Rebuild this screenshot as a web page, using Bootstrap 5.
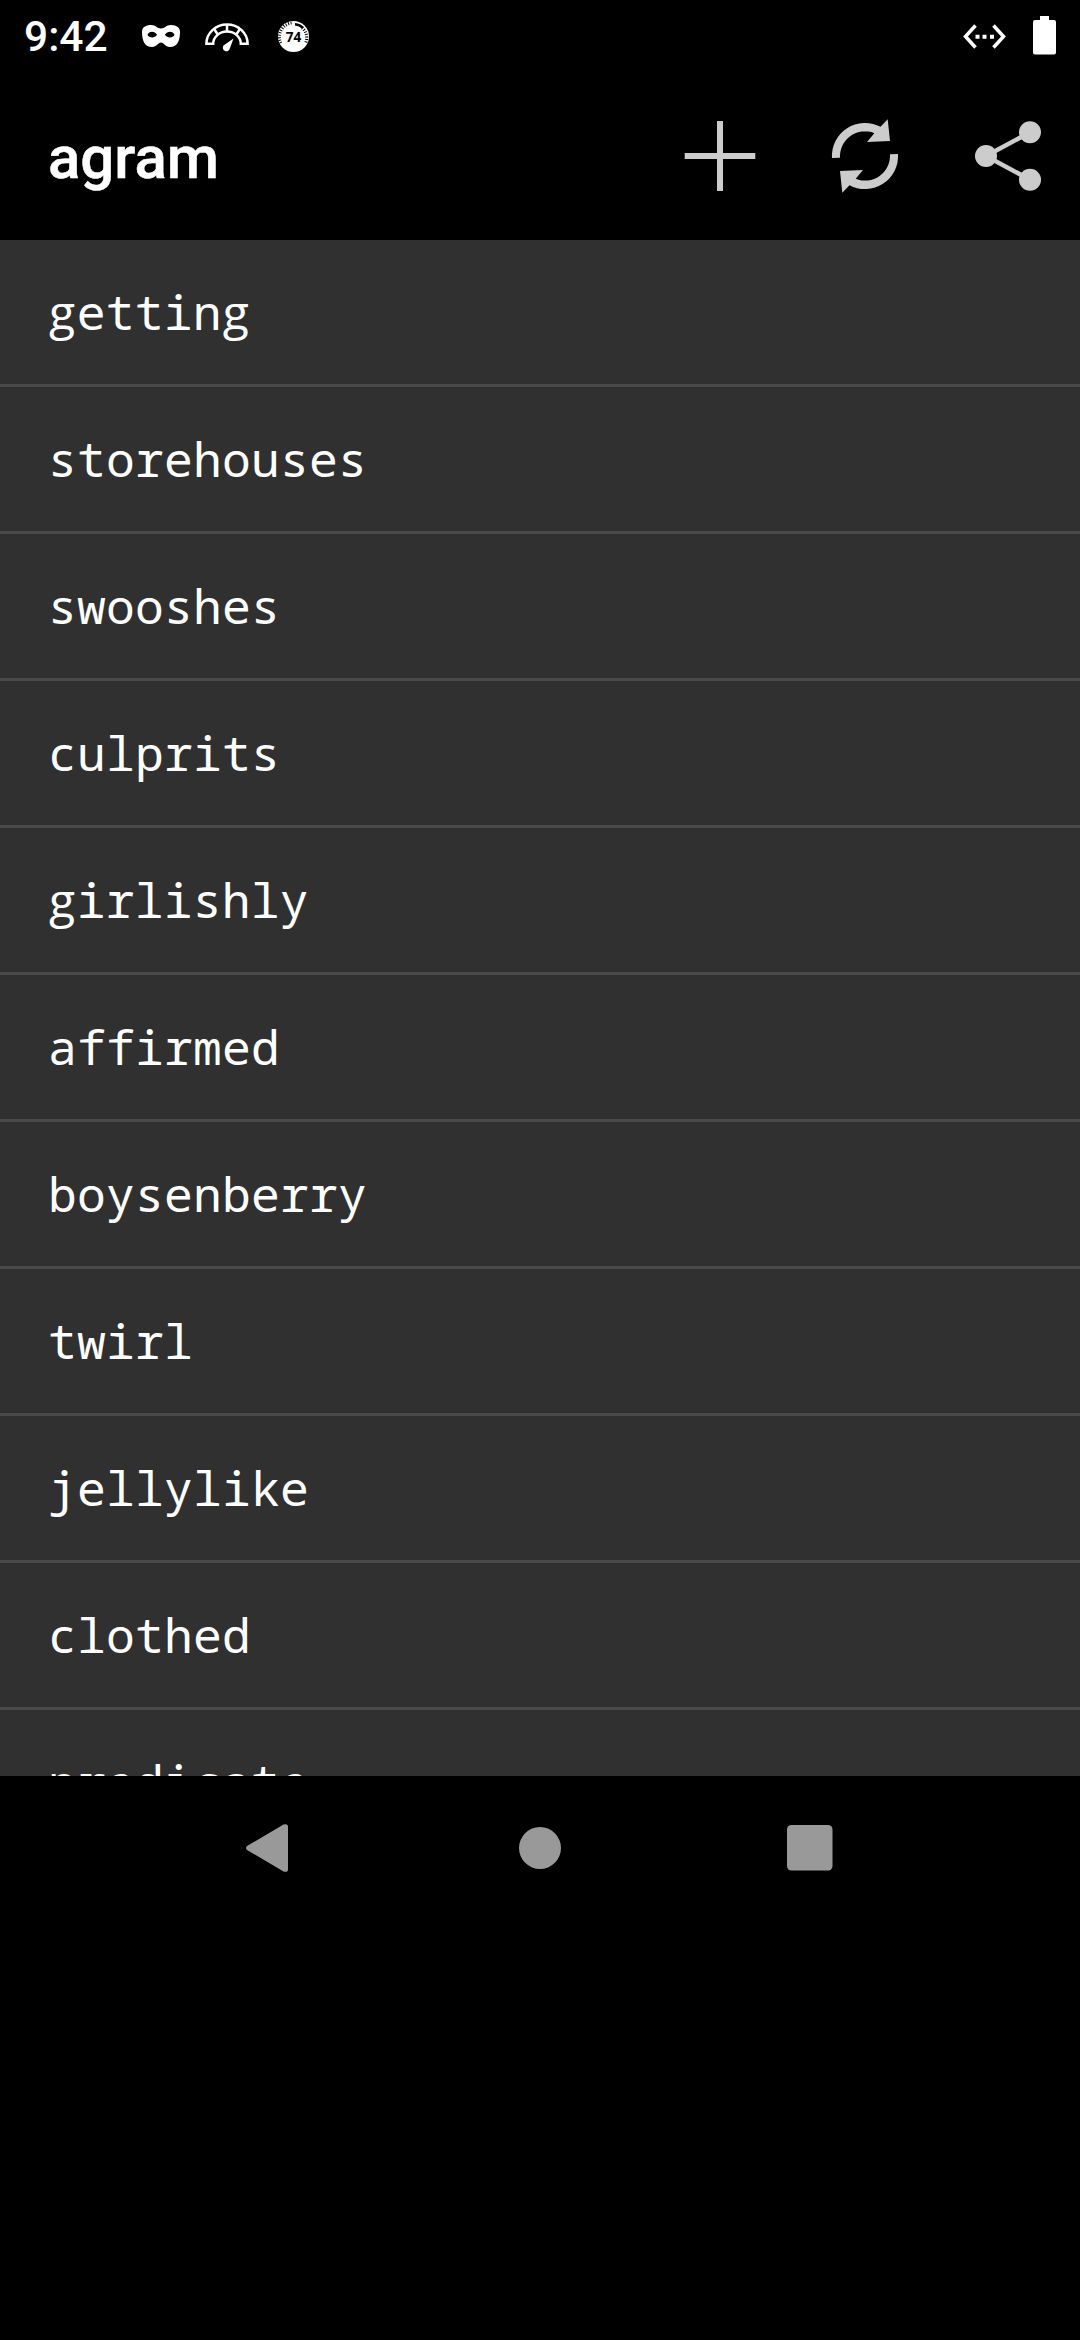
<!DOCTYPE html>
<html lang="en" data-bs-theme="dark">
<head>
<meta charset="utf-8">
<meta name="viewport" content="width=device-width, initial-scale=1">
<title>agram</title>
<link rel="stylesheet" href="https://cdn.jsdelivr.net/npm/bootstrap@5.3.0/dist/css/bootstrap.min.css">
<style>
body { background: #000; color: #fff; font-family: Roboto, sans-serif; height: 2340px; overflow: hidden; }
svg { display: block; flex: none; }
.status-bar { height: 72px; padding: 0 24px; }
.clock { font-size: 42.5px; line-height: 74px; font-weight: 500; width: 114px; }
.app-bar { height: 168px; padding: 0 0 0 48px; }
.app-title { font-size: 60px; line-height: 164px; font-weight: 500; padding-top: 4px; -webkit-text-stroke: .5px #fff; }
.action-btn { width: 144px; height: 168px; --bs-btn-padding-x: 0; --bs-btn-padding-y: 0; --bs-btn-border-width: 0; }
.action-btn svg { fill: #ccc; stroke: none; }
.word-list { height: 1536px; --bs-list-group-bg: #303030; --bs-list-group-color: #fff; background: #303030; --bs-list-group-border-width: 0; }
.word-list .list-group-item { flex: none; height: 147px; padding: 0 48px; border-bottom: 3px solid #4a4a4a; font-family: "Noto Sans Mono", "DejaVu Sans Mono", monospace; font-size: 48px; line-height: 144px; letter-spacing: .2px; }
.word-list .loop { font-family: "Open Sans", sans-serif; letter-spacing: 1.7px; margin-left: 1px; line-height: 1; }
.nav-keys { height: 144px; padding: 0 135px; fill: #999; }
.nav-key { width: 270px; --bs-btn-padding-x: 0; --bs-btn-padding-y: 0; --bs-btn-border-width: 0; }
</style>
<script src="https://cdn.jsdelivr.net/npm/bootstrap@5.3.0/dist/js/bootstrap.bundle.min.js"></script>
</head>
<body>
<header>
  <div class="status-bar d-flex justify-content-between overflow-hidden">
    <div class="d-flex">
      <div class="clock">9:42</div>
      <!-- mask, gauge and score notifications -->
      <svg width="182" height="72" viewBox="138 0 182 72" fill="#fff">
        <path fill-rule="evenodd" d="M142 32C142 27 146 25 151 25C156 25 157 28.500 161 28.500C165 28.500 166 25 171 25C177 25 180 28 180 32C180 41 177 47 170 47C165 47 164 42.500 161 42.500C158 42.500 157 47 152 47C145 47 142 41 142 32ZM147.500 34.800C149 38.500 155 38.500 157 34.800C155 30.800 149 30.800 147.500 34.800ZM165 34.800C167 38.500 173 38.500 174.500 34.800C173 30.800 167 30.800 165 34.800Z"/>
        <g fill="none" stroke="#fff" stroke-width="2.500">
          <path d="M206.400 43.800A20.600 19.300 0 0 1 247.600 43.800H240.800A13.800 12.300 0 0 0 213.200 43.800Z"/>
          <path d="M227 24V32M214.500 29.500L218 35M239.500 29.500L236 35"/>
        </g>
        <path d="M233.500 38.500L230 48A3.600 3.600 0 1 1 223.500 45.500Z"/>
        <circle cx="293.500" cy="36.500" r="15.500"/>
        <path d="M280.800 43A14.200 14.200 0 0 1 293 22.800" fill="none" stroke="#000" stroke-width="3" stroke-dasharray="1 1.500"/>
        <path d="M302 27.800A12.500 12.500 0 0 1 305.500 43" fill="none" stroke="#000" stroke-width="3" stroke-dasharray="1 1.500"/>
        <path d="M295 24.200Q300 24.500 303 28" fill="none" stroke="#000" stroke-width="2.500"/>
        <text x="293.500" y="41.500" text-anchor="middle" font-family="Open Sans" font-size="13.500" font-weight="700" fill="#000">74</text>
      </svg>
    </div>
    <svg width="96" height="72" viewBox="960 0 96 72" fill="#fff">
      <path d="M975.500 25.500L965.500 36.500L975.500 47.500M993.500 25.500L1003.500 36.500L993.500 47.500" fill="none" stroke="#fff" stroke-width="3.500"/>
      <path d="M975.500 34.800h4v4h-4zM982.500 34.800h4v4h-4zM990 34.800h4v4h-4z"/>
      <path d="M1040 16h9v4h5a2 2 0 0 1 2 2v30.500a2 2 0 0 1-2 2h-19a2 2 0 0 1-2-2V22a2 2 0 0 1 2-2h5z"/>
    </svg>
  </div>
  <nav class="app-bar navbar flex-nowrap">
    <span class="app-title">agram</span>
    <div class="d-flex">
      <button class="btn action-btn" aria-label="Add"><svg width="144" height="168" viewBox="648 72 144 168"><path d="M717 121h6v32h32.300v6H723v32h-6v-32h-32.300v-6H717z"/></svg></button>
      <button class="btn action-btn" aria-label="Refresh"><svg width="144" height="168" viewBox="792 72 144 168"><g id="arrow"><path d="M832 158A33 33 0 0 1 880.500 126.800L887.700 119.300L890 141L867 142L874.300 133.200A25 25 0 0 0 840 157.700Z"/></g><use href="#arrow" transform="rotate(180 865 156)"/></svg></button>
      <button class="btn action-btn" aria-label="Share"><svg width="144" height="168" viewBox="936 72 144 168"><path d="M1030 132.300L986 156L1030 179.700" style="fill:none;stroke:#ccc;stroke-width:4.500"/><circle cx="986" cy="156" r="11"/><circle cx="1030" cy="132.300" r="11"/><circle cx="1030" cy="179.700" r="11"/></svg></button>
    </div>
  </nav>
</header>
<main class="word-list list-group list-group-flush overflow-hidden">
  <div class="list-group-item"><span class="loop">g</span>ettin<span class="loop">g</span></div>
  <div class="list-group-item">storehouses</div>
  <div class="list-group-item">swooshes</div>
  <div class="list-group-item">culprits</div>
  <div class="list-group-item"><span class="loop">g</span>irlishly</div>
  <div class="list-group-item">affirmed</div>
  <div class="list-group-item">boysenberry</div>
  <div class="list-group-item">twirl</div>
  <div class="list-group-item">jellylike</div>
  <div class="list-group-item">clothed</div>
  <div class="list-group-item">predicate</div>
</main>
<footer class="nav-keys d-flex align-items-center">
  <button class="btn nav-key d-flex justify-content-center" aria-label="Back"><svg width="48" height="48" viewBox="0 0 48 48"><path d="M1 22L37.500 .6Q42 -1 42 3V45Q42 49 37.500 47.400L1 26Q-1 24 1 22Z"/></svg></button>
  <button class="btn nav-key d-flex justify-content-center" aria-label="Home"><svg width="42" height="42"><circle cx="21" cy="21" r="21"/></svg></button>
  <button class="btn nav-key d-flex justify-content-center" aria-label="Overview"><svg width="46" height="46"><rect width="45.500" height="45.500" rx="4.500"/></svg></button>
</footer>
</body>
</html>
